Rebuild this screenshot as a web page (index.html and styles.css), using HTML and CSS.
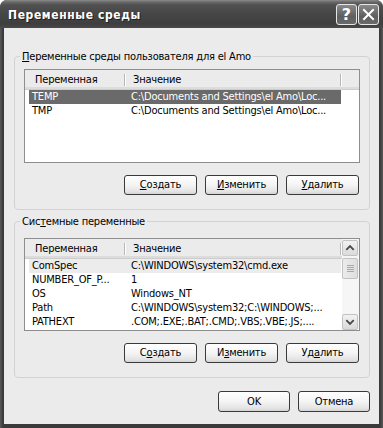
FILE: index.html
```html
<!DOCTYPE html>
<html lang="ru">
<head>
<meta charset="utf-8">
<title>Переменные среды</title>
<link rel="stylesheet" href="styles.css">
</head>
<body>
<div class="window">
  <div class="titlebar">
    <span class="title">Переменные среды</span>
    <div class="tb-buttons">
      <span class="tb-btn tb-help">?</span>
      <span class="tb-btn"><svg width="13" height="13" viewBox="0 0 13 13"><path d="M2 2 L11 11 M11 2 L2 11" stroke="#fff" stroke-width="2" stroke-linecap="square" fill="none"/></svg></span>
    </div>
  </div>
  <div class="client">
    <fieldset class="group group-user">
      <legend><u>П</u>еременные среды пользователя для el Amo</legend>
      <div class="list list-user">
        <div class="list-main">
          <div class="header">
            <div class="hcol h1">Переменная</div>
            <div class="hcol h2">Значение</div>
            <div class="hfill"></div>
          </div>
          <div class="rows">
            <div class="row sel"><span class="c1">TEMP</span><span class="c2">C:\Documents and Settings\el Amo\Loc...</span></div>
            <div class="row"><span class="c1">TMP</span><span class="c2">C:\Documents and Settings\el Amo\Loc...</span></div>
          </div>
        </div>
      </div>
      <div class="btnrow">
        <button class="btn"><u>С</u>оздать</button>
        <button class="btn"><u>И</u>зменить</button>
        <button class="btn"><u>У</u>далить</button>
      </div>
    </fieldset>

    <fieldset class="group group-sys">
      <legend>Сис<u>т</u>емные переменные</legend>
      <div class="list list-sys">
        <div class="list-main">
          <div class="header">
            <div class="hcol h1">Переменная</div>
            <div class="hcol h2">Значение</div>
            <div class="hfill"></div>
          </div>
          <div class="rows">
            <div class="row unf"><span class="c1">ComSpec</span><span class="c2">C:\WINDOWS\system32\cmd.exe</span></div>
            <div class="row"><span class="c1">NUMBER_OF_P...</span><span class="c2">1</span></div>
            <div class="row"><span class="c1">OS</span><span class="c2">Windows_NT</span></div>
            <div class="row"><span class="c1">Path</span><span class="c2">C:\WINDOWS\system32;C:\WINDOWS;...</span></div>
            <div class="row"><span class="c1">PATHEXT</span><span class="c2">.COM;.EXE;.BAT;.CMD;.VBS;.VBE;.JS;....</span></div>
          </div>
        </div>
        <div class="sb">
          <div class="sb-btn"><svg width="15" height="14" viewBox="0 0 15 14"><path d="M3.5 9 L7.5 5 L11.5 9" stroke="#4a4a4a" stroke-width="2" fill="none"/></svg></div>
          <div class="sb-thumb"><span></span><span></span><span></span><span></span></div>
          <div class="sb-track"></div>
          <div class="sb-btn"><svg width="15" height="14" viewBox="0 0 15 14"><path d="M3.5 5 L7.5 9 L11.5 5" stroke="#4a4a4a" stroke-width="2" fill="none"/></svg></div>
        </div>
      </div>
      <div class="btnrow">
        <button class="btn">С<u>о</u>здать</button>
        <button class="btn">И<u>з</u>менить</button>
        <button class="btn">Уд<u>а</u>лить</button>
      </div>
    </fieldset>

    <div class="dlg-buttons">
      <button class="btn">OK</button>
      <button class="btn">Отмена</button>
    </div>
  </div>
</div>
</body>
</html>
```

FILE: styles.css
```css
html, body {
  margin: 0;
  padding: 0;
  background: #ffffff;
}
body {
  font-family: "DejaVu Sans Condensed", "DejaVu Sans", sans-serif;
  font-size: 11px;
  letter-spacing: -0.2px;
  color: #000;
}
.window {
  width: 383px;
  height: 428px;
  box-sizing: border-box;
  display: flex;
  flex-direction: column;
  background: linear-gradient(90deg, #5a5a5a 0, #3a3a3a 3px, #3a3a3a 380px, #5a5a5a 383px);
  border-radius: 7px 7px 0 0;
  overflow: hidden;
}
.titlebar {
  height: 28px;
  flex: none;
  display: flex;
  align-items: center;
  padding: 0 4px 0 8px;
  background: linear-gradient(#8c8c8c 0, #6a6a6a 2px, #505050 5px, #464646 14px, #3e3e3e 24px, #4a4a4a 28px);
}
.title {
  flex: 1;
  color: #fff;
  font-family: "DejaVu Sans Condensed", "DejaVu Sans", sans-serif;
  font-weight: bold;
  font-size: 12px;
  letter-spacing: 0.6px;
  text-shadow: 1px 1px 0 #1e1e1e;
  padding-top: 1px;
}
.tb-buttons {
  display: flex;
  gap: 1px;
  padding-top: 1px;
}
.tb-btn {
  width: 21px;
  height: 21px;
  box-sizing: border-box;
  border: 1px solid #e6e6e6;
  border-radius: 3px;
  background: linear-gradient(#8a8a8a, #5e5e5e 60%, #6a6a6a);
  display: flex;
  align-items: center;
  justify-content: center;
  color: #fff;
}
.tb-help {
  font-family: "DejaVu Sans", sans-serif;
  font-weight: bold;
  font-size: 16px;
  letter-spacing: 0;
  line-height: 1;
}
.client {
  flex: 1;
  margin: 0 4px 4px 4px;
  background: #ebebeb;
  display: flex;
  flex-direction: column;
}
.group {
  width: 356px;
  box-sizing: border-box;
  border: 1px solid #d2d2d2;
  border-radius: 4px;
  margin: 0 9px 0 10px;
  padding: 6px 9px 14px 9px;
  min-width: 0;
}
.group-user {
  margin-top: 22px;
}
.group-sys {
  margin-top: 5px;
  padding-top: 10px;
}
.group legend {
  margin-left: -4px;
  padding: 0 2px;
  line-height: 13px;
}
.list {
  border: 1px solid #8e8e8e;
  background: #fff;
  display: flex;
  box-sizing: border-box;
}
.list-user {
  height: 94px;
}
.list-sys {
  height: 93px;
}
.list-main {
  flex: 1;
  min-width: 0;
  display: flex;
  flex-direction: column;
}
.header {
  height: 20px;
  box-sizing: border-box;
  display: flex;
  background: #ebebeb;
  border-bottom: 1px solid #cdcdcd;
  box-shadow: inset 0 -2px 0 #dcdcdc;
  flex: none;
}
.hcol {
  box-sizing: border-box;
  line-height: 19px;
  white-space: nowrap;
  position: relative;
}
.hcol::after {
  content: "";
  position: absolute;
  right: 0;
  top: 4px;
  height: 12px;
  width: 1px;
  background: #b8b8b8;
  box-shadow: 1px 0 0 #fff;
}
.h1 {
  width: 100px;
  padding-left: 10px;
}
.h2 {
  width: 216px;
  padding-left: 8px;
}
.hfill {
  flex: 1;
}
.rows {
  display: flex;
  flex-direction: column;
}
.row {
  display: flex;
  height: 14px;
  line-height: 14px;
  margin-left: 4px;
  width: 312px;
  white-space: nowrap;
}
.row .c1 {
  width: 95px;
  padding-left: 3px;
  box-sizing: border-box;
  overflow: hidden;
}
.row .c2 {
  width: 217px;
  padding-left: 7px;
  box-sizing: border-box;
  overflow: hidden;
}
.row.sel {
  background: #6a6a6a;
  color: #fff;
}
.row.unf {
  background: #ececec;
}
.sb {
  width: 17px;
  flex: none;
  display: flex;
  flex-direction: column;
  background: #f6f6f6;
  padding: 1px 1px 0 0;
  box-sizing: border-box;
}
.sb-btn {
  height: 16px;
  box-sizing: border-box;
  border: 1px solid #c2c2c2;
  border-radius: 2px;
  background: linear-gradient(#f2f2f2, #dadada);
  display: flex;
  align-items: center;
  justify-content: center;
}
.sb-thumb {
  height: 21px;
  margin-top: 2px;
  box-sizing: border-box;
  border: 1px solid #c2c2c2;
  border-radius: 2px;
  background: linear-gradient(90deg, #ececec, #dedede);
  display: flex;
  flex-direction: column;
  align-items: center;
  justify-content: center;
  gap: 1px;
}
.sb-thumb span {
  width: 7px;
  height: 1px;
  background: #a8a8a8;
}
.sb-track {
  flex: 1;
}
.btnrow {
  display: flex;
  justify-content: flex-end;
  gap: 8px;
  margin-top: 12px;
  padding-right: 1px;
}
.btn {
  width: 73px;
  height: 20px;
  box-sizing: border-box;
  border: 1px solid #3a3a3a;
  border-radius: 3px;
  background: linear-gradient(#ffffff 0, #f4f4f4 50%, #e4e4e4 85%, #d4d4d4 100%);
  font-family: "DejaVu Sans Condensed", "DejaVu Sans", sans-serif;
  font-size: 11px;
  letter-spacing: -0.2px;
  color: #000;
  padding: 0;
  line-height: 18px;
  text-align: center;
}
.dlg-buttons {
  display: flex;
  justify-content: flex-end;
  gap: 8px;
  margin-top: 13px;
  padding-right: 9px;
}
.dlg-buttons .btn {
  width: 72px;
  height: 21px;
}
```
